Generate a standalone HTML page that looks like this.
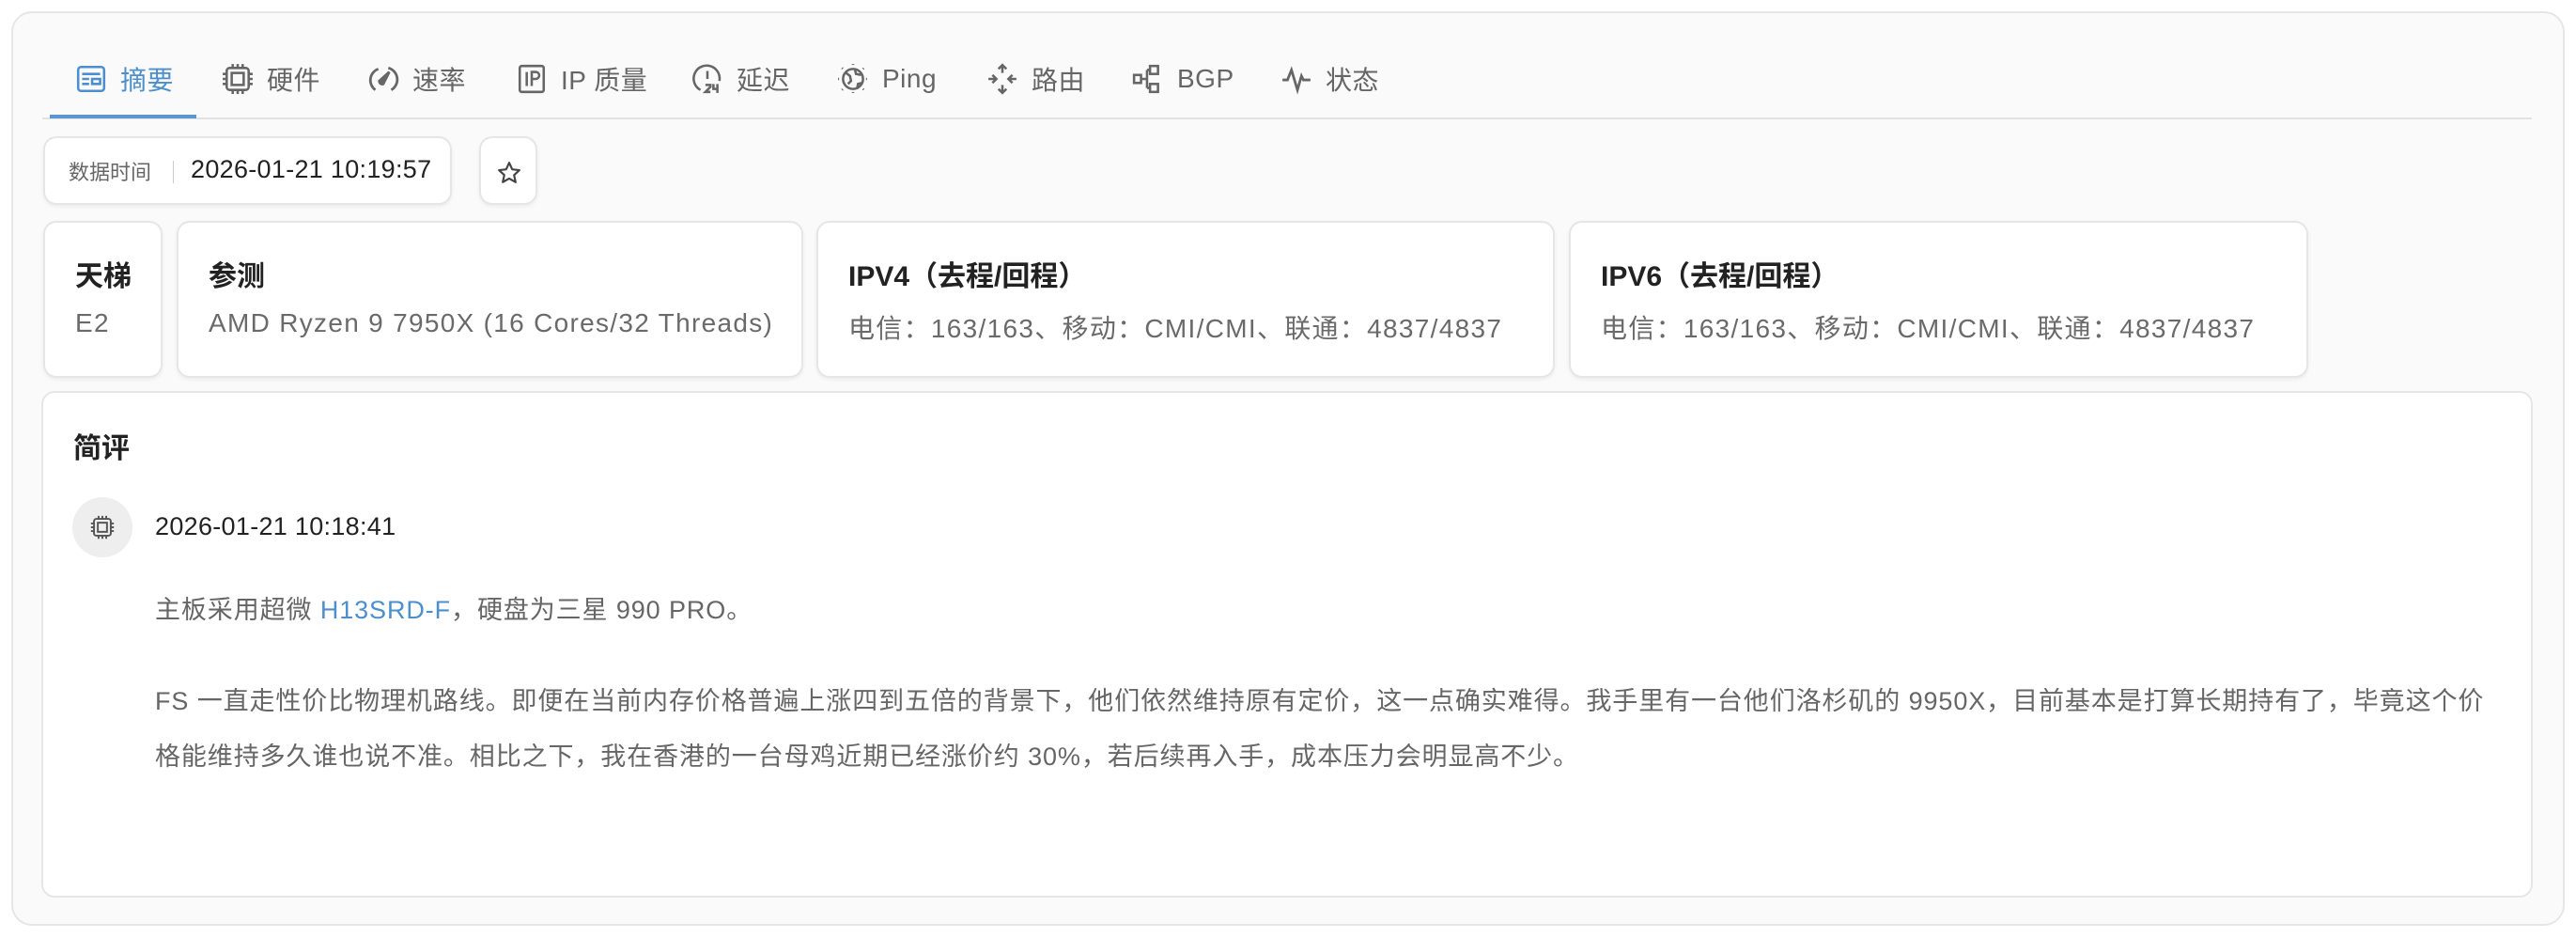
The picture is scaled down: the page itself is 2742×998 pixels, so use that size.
<!DOCTYPE html>
<html><head><meta charset="utf-8"><style>
*{box-sizing:border-box;margin:0;padding:0}
body{width:2742px;height:998px;background:#fff;font-family:"Liberation Sans","Noto Sans CJK SC",sans-serif;position:relative;overflow:hidden}
.outer{position:absolute;left:12px;top:12px;width:2718px;height:973px;background:#fafafa;border:2px solid #e6e6e6;border-radius:22px}
.tabs{position:absolute;left:45px;top:0;width:2650px;height:127px;border-bottom:2px solid #e2e2e2}
.tab{position:absolute;top:66px;height:36px;display:flex;align-items:center;font-size:28px;color:#666;white-space:nowrap;letter-spacing:.5px}
.tab svg{width:34px;height:34px;margin-right:14px;flex:none}
.tab.act{color:#4d8fcc}
.ul{position:absolute;left:53px;top:122px;width:156px;height:4px;background:#5a96d0}
.box{position:absolute;background:#fff;border:2px solid #e6e6e6;border-radius:14px;box-shadow:0 2px 4px rgba(0,0,0,.06)}
.h{font-size:30px;font-weight:bold;color:#222;position:absolute;left:32px;top:32px;white-space:nowrap}
.v{font-size:28px;color:#6a6a6a;position:absolute;left:32px;top:91px;white-space:nowrap;letter-spacing:1.3px}
.p{position:absolute;left:165px;font-size:27px;color:#666;white-space:nowrap;letter-spacing:.9px}
</style></head><body>
<div class="outer"></div>
<div class="tabs"></div>
<div class="ul"></div>
<div class="tab act" style="left:80px"><svg viewBox="0 0 32 32" fill="none" stroke="currentColor" stroke-width="2.4"><rect x="3" y="4" width="26" height="24" rx="3"/><path d="M7 11h18M7 16h7M7 21h7M17 16h8v5h-8z"/></svg>摘要</div>
<div class="tab" style="left:236px"><svg viewBox="0 0 32 32" fill="none" stroke="currentColor" stroke-width="2.4"><rect x="5" y="5" width="22" height="22" rx="3"/><rect x="10" y="10" width="12" height="12"/><path d="M11 1v4M16 1v4M21 1v4M11 27v4M16 27v4M21 27v4M1 11h4M1 16h4M1 21h4M27 11h4M27 16h4M27 21h4"/></svg>硬件</div>
<div class="tab" style="left:391px"><svg viewBox="0 0 32 32" fill="none" stroke="currentColor" stroke-width="2.6"><path d="M8 27A12 12 0 0 1 11 6M21 5A12 12 0 0 1 24 27"/><path d="M22 9l-6 12a3 3 0 0 1-4-3z" fill="currentColor"/></svg>速率</div>
<div class="tab" style="left:549px"><svg viewBox="0 0 32 32" fill="none" stroke="currentColor" stroke-width="2.4"><rect x="4" y="3" width="24" height="26" rx="2"/><path d="M11 9v14M16 23V9h4a3 3 0 0 1 0 7h-4"/></svg>IP 质量</div>
<div class="tab" style="left:736px"><svg viewBox="0 0 32 32" fill="none" stroke="currentColor" stroke-width="2.4"><path d="M9 27A13 13 0 1 1 28 18"/><path d="M16 8v8"/><path d="M14 22h5v2l-5 5h5M22 21v5h5M26 21v9"/></svg>延迟</div>
<div class="tab" style="left:891px"><svg viewBox="0 0 32 32" fill="none" stroke="currentColor" stroke-width="2.4"><circle cx="16" cy="16" r="10"/><path d="M9 10l4 3 1 5-3 3M18 7l1 4 5 1M20 26l1-5 4-1" /><path d="M16 1v2M16 29v2M1 16h2M29 16h2M5 5l1 1M26 26l1 1M5 27l1-1M26 6l1-1" stroke-dasharray="1 1"/></svg>Ping</div>
<div class="tab" style="left:1050px"><svg viewBox="0 0 32 32" fill="none" stroke="currentColor" stroke-width="2.4"><path d="M16 2v8M12 6l4-4 4 4M16 22v8M12 26l4 4 4-4M2 16h8M6 12l4 4-4 4M22 16h8M26 12l-4 4 4 4"/></svg>路由</div>
<div class="tab" style="left:1205px"><svg viewBox="0 0 32 32" fill="none" stroke="currentColor" stroke-width="2.4"><rect x="2" y="12" width="7" height="8"/><rect x="18" y="3" width="8" height="8"/><rect x="18" y="21" width="8" height="8"/><path d="M9 16h6M15 7v18M15 7h3M15 25h3"/></svg>BGP</div>
<div class="tab" style="left:1363px"><svg viewBox="0 0 32 32" fill="none" stroke="currentColor" stroke-width="2.6"><path d="M2 17h5l4-10 6 20 4-14 2 4h7"/></svg>状态</div>

<div class="box" style="left:46px;top:145px;width:435px;height:73px">
<span style="position:absolute;left:25px;top:19px;font-size:22px;color:#666">数据时间</span>
<span style="position:absolute;left:136px;top:24px;width:1px;height:24px;background:#ccc"></span>
<span style="position:absolute;left:155px;top:18px;font-size:27px;color:#222;letter-spacing:.3px">2026-01-21 10:19:57</span></div>
<div class="box" style="left:510px;top:145px;width:62px;height:73px"><svg style="position:absolute;left:17px;top:24px" width="26" height="26" viewBox="0 0 24 24" fill="none" stroke="#444" stroke-width="2" stroke-linejoin="round"><path d="M12 2l3 6.5 7 .8-5.2 4.8 1.5 7L12 17.5 5.7 21l1.5-7L2 9.3l7-.8z"/></svg></div>

<div class="box" style="left:46px;top:235px;width:127px;height:167px"><div class="h">天梯</div><div class="v">E2</div></div>
<div class="box" style="left:188px;top:235px;width:667px;height:167px"><div class="h">参测</div><div class="v">AMD Ryzen 9 7950X (16 Cores/32 Threads)</div></div>
<div class="box" style="left:869px;top:235px;width:786px;height:167px"><div class="h">IPV4（去程/回程）</div><div class="v">电信：163/163、移动：CMI/CMI、联通：4837/4837</div></div>
<div class="box" style="left:1670px;top:235px;width:787px;height:167px"><div class="h">IPV6（去程/回程）</div><div class="v">电信：163/163、移动：CMI/CMI、联通：4837/4837</div></div>

<div class="box" style="left:44px;top:416px;width:2652px;height:539px;box-shadow:none"></div>
<div style="position:absolute;left:78px;top:452px;font-size:30px;font-weight:bold;color:#222">简评</div>
<div style="position:absolute;left:77px;top:529px;width:64px;height:64px;border-radius:50%;background:#eeeeee"><svg style="position:absolute;left:19px;top:19px" width="26" height="26" viewBox="0 0 32 32" fill="none" stroke="#555" stroke-width="2.4"><rect x="5" y="5" width="22" height="22" rx="3"/><rect x="10" y="10" width="12" height="12"/><path d="M11 1v4M16 1v4M21 1v4M11 27v4M16 27v4M21 27v4M1 11h4M1 16h4M1 21h4M27 11h4M27 16h4M27 21h4"/></svg></div>
<div style="position:absolute;left:165px;top:545px;font-size:27px;color:#222;letter-spacing:.3px">2026-01-21 10:18:41</div>
<div class="p" style="top:627px">主板采用超微 <span style="color:#4d8fcc">H13SRD-F</span>，硬盘为三星 990 PRO。</div>
<div class="p" style="top:717px;line-height:59px">FS 一直走性价比物理机路线。即便在当前内存价格普遍上涨四到五倍的背景下，他们依然维持原有定价，这一点确实难得。我手里有一台他们洛杉矶的 9950X，目前基本是打算长期持有了，毕竟这个价<br>格能维持多久谁也说不准。相比之下，我在香港的一台母鸡近期已经涨价约 30%，若后续再入手，成本压力会明显高不少。</div>
</body></html>
